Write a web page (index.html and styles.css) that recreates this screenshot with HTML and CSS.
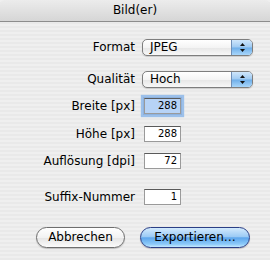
FILE: index.html
```html
<!DOCTYPE html>
<html lang="de">
  <head>
    <meta charset="utf-8" />
    <title>Bild(er)</title>
    <link rel="stylesheet" href="styles.css">
  </head>
  <body>
    <div class="window">
      <header class="titlebar">Bild(er)</header>
      <div class="form">
        <div class="row">
          <label class="label">Format</label>
          <div class="popup">
            <span class="popupText">JPEG</span>
            <span class="popupArrows">
              <svg width="7" height="11" viewBox="0 0 7 11">
                <path d="M3.5 1 L6 4 L1 4 Z" fill="#111" />
                <path d="M3.5 10 L6 7 L1 7 Z" fill="#111" />
              </svg>
            </span>
          </div>
        </div>
        <div class="row rowQuality">
          <label class="label">Qualität</label>
          <div class="popup">
            <span class="popupText">Hoch</span>
            <span class="popupArrows">
              <svg width="7" height="11" viewBox="0 0 7 11">
                <path d="M3.5 1 L6 4 L1 4 Z" fill="#111" />
                <path d="M3.5 10 L6 7 L1 7 Z" fill="#111" />
              </svg>
            </span>
          </div>
        </div>
        <div class="row rowWidth">
          <label class="label">Breite [px]</label>
          <div class="field focused">288</div>
        </div>
        <div class="row rowHeight">
          <label class="label">Höhe [px]</label>
          <div class="field">288</div>
        </div>
        <div class="row rowRes">
          <label class="label">Auflösung [dpi]</label>
          <div class="field">72</div>
        </div>
        <div class="row rowSuffix">
          <label class="label">Suffix-Nummer</label>
          <div class="field">1</div>
        </div>
        <div class="buttons">
          <button class="button" type="button">Abbrechen</button>
          <button class="button default" type="button">Exportieren…</button>
        </div>
      </div>
    </div>
  </body>
</html>
```

FILE: styles.css
```css
* {
  box-sizing: border-box;
  font-family: "DejaVu Sans", sans-serif;
  color: #000;
}
body {
  margin: 0;
}
.window {
  width: 270px;
  height: 260px;
  overflow: hidden;
  background: repeating-linear-gradient(
    to bottom,
    #efefef 0,
    #efefef 2px,
    #e9e9e9 2px,
    #e9e9e9 4px
  );
}
.titlebar {
  height: 22px;
  padding-top: 3px;
  border-bottom: 1px solid #8c8c8c;
  border-radius: 5px 5px 0 0;
  background: linear-gradient(to bottom, #ececec, #d6d6d6);
  text-align: center;
  font-size: 12px;
  line-height: 15px;
}
.form {
  padding-top: 17px;
}
.row {
  display: flex;
  align-items: center;
}
.rowQuality {
  margin-top: 15px;
}
.rowWidth {
  margin-top: 10px;
}
.rowHeight {
  margin-top: 12px;
}
.rowRes {
  margin-top: 11px;
}
.rowSuffix {
  margin-top: 20px;
}
.label {
  width: 135px;
  text-align: right;
  font-size: 12px;
  line-height: 15px;
}
.popup {
  display: flex;
  width: 111px;
  height: 17px;
  margin-left: 7px;
  border: 1px solid #7e7e7e;
  border-radius: 5px;
  overflow: hidden;
  background: linear-gradient(to bottom, #ffffff 0, #f4f4f4 50%, #e6e6e6 51%, #f8f8f8 100%);
  box-shadow: 0 1px 1px rgba(0, 0, 0, 0.15);
}
.popupText {
  flex: 1;
  padding-left: 7px;
  font-size: 12px;
  line-height: 15px;
}
.popupArrows {
  display: flex;
  align-items: center;
  justify-content: center;
  width: 21px;
  border-left: 1px solid #6f8fb8;
  background: linear-gradient(to bottom, #cfe6fb 0, #9fcaf2 48%, #6eaee9 52%, #a8d6fb 100%);
}
.field {
  width: 37px;
  height: 16px;
  margin-left: 9px;
  padding-right: 3px;
  border: 1px solid #9a9a9a;
  border-top-color: #5a5a5a;
  background: #fff;
  text-align: right;
  font-size: 10px;
  line-height: 14px;
}
.focused {
  background: #b7d3f6;
  box-shadow: 0 0 0 1px #8eb2de, 0 0 1px 3px #9cc0ea;
}
.buttons {
  display: flex;
  justify-content: flex-end;
  gap: 15px;
  margin-top: 22px;
  padding-right: 20px;
}
.button {
  height: 21px;
  padding: 0;
  border: 1px solid #6e6e6e;
  border-radius: 11px;
  background: linear-gradient(to bottom, #ffffff 0, #f2f2f2 50%, #e4e4e4 51%, #fbfbfb 100%);
  box-shadow: 0 1px 1px rgba(0, 0, 0, 0.2);
  font-size: 12px;
  line-height: 17px;
  width: 89px;
}
.default {
  width: 110px;
  border-color: #2b3f86;
  background: linear-gradient(to bottom, #d3eafd 0, #9ccbf5 45%, #5ea6ec 52%, #8ccaf9 85%, #c6e9ff 100%);
}
```
